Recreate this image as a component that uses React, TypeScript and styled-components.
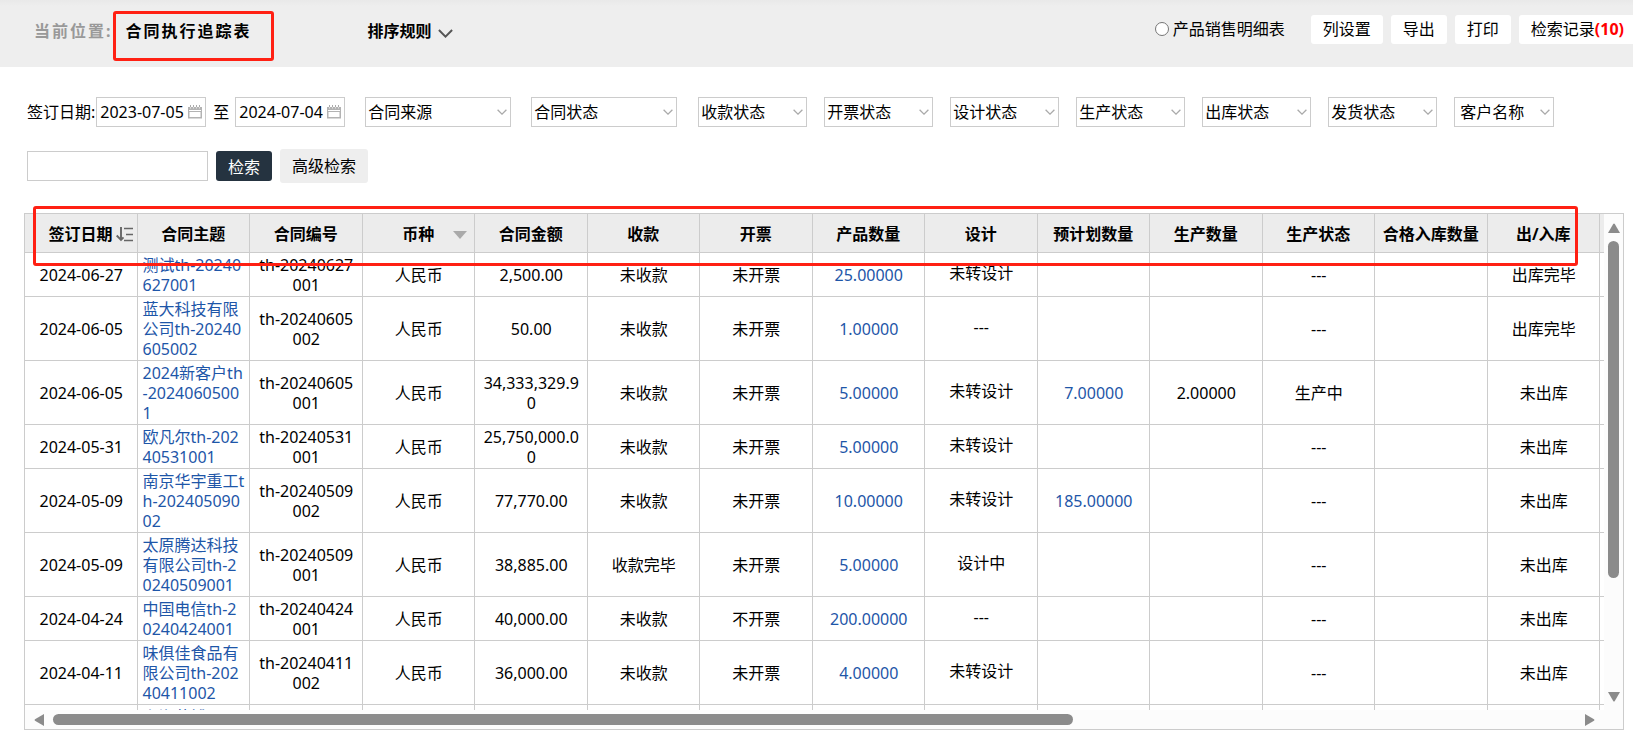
import React from "react";
import styled, { createGlobalStyle } from "styled-components";

const GlobalStyle = createGlobalStyle`
  *, *::before, *::after { box-sizing: border-box; }
  body {
    margin: 0;
    background: #fff;
    color: #000;
    font: 16px/20px "Noto Sans", "Noto Sans CJK SC", sans-serif;
  }
  button, input, select { font: inherit; color: inherit; margin: 0; }
`;

const Page = styled.div`
  display: flex;
  flex-direction: column;
  height: 100vh;
  overflow: hidden;
`;

const TopBar = styled.header`
  display: flex;
  align-items: flex-start;
  justify-content: space-between;
  height: 67px;
  padding: 14px 0 0 34px;
  background: linear-gradient(#e9e9e9, #eee 6px);
`;

const TopGroup = styled.div<{ $gap: number; $height: number }>`
  display: flex;
  align-items: center;
  gap: ${(p) => p.$gap}px;
  height: ${(p) => p.$height}px;
  white-space: nowrap;
`;

const Location = styled.div`
  display: flex;
  align-items: center;
  font-weight: 700;
  letter-spacing: 2px;
  color: #999;
`;

const Title = styled.h1`
  position: relative;
  margin: 0;
  padding: 0 22px 0 13px;
  font-size: 16px;
  line-height: 32px;
  color: #000;
`;

const TitleMark = styled.span`
  position: absolute;
  inset: -4px 0 -14px 0;
  border: 3px solid #ff2013;
  border-radius: 3px;
`;

const SortButton = styled.button`
  display: flex;
  align-items: center;
  gap: 6px;
  margin-left: 94px;
  padding: 0;
  border: 0;
  background: none;
  font-weight: 700;
  svg {
    margin-top: 4px;
  }
`;

const RadioLabel = styled.label`
  display: flex;
  align-items: center;
  gap: 4px;
  margin-right: 18px;
`;

const Radio = styled.input`
  appearance: none;
  width: 14px;
  height: 14px;
  border: 1px solid #767676;
  border-radius: 50%;
  background: #fff;
`;

const ToolButton = styled.button<{ $last?: boolean }>`
  height: 29px;
  padding: ${(p) => (p.$last ? "0 9px 0 12px" : "0 12px")};
  border: 0;
  border-radius: ${(p) => (p.$last ? "3px 0 0 3px" : "3px")};
  background: #fff;
`;

const Count = styled.b`
  color: #f00;
`;

const Filters = styled.form`
  display: flex;
  flex-direction: column;
  gap: 22px;
  padding: 30px 27px;
`;

const FilterRow = styled.div<{ $gap: number }>`
  display: flex;
  align-items: center;
  gap: ${(p) => p.$gap}px;
`;

const DateRange = styled.div`
  display: flex;
  align-items: center;
  gap: 1px;
  margin-right: 3px;
  white-space: nowrap;
`;

const To = styled.span`
  padding: 0 5px 0 6px;
`;

const Field = styled.span<{ $width: number }>`
  position: relative;
  display: flex;
  width: ${(p) => p.$width}px;
  svg {
    position: absolute;
    right: 4px;
    top: 0;
    bottom: 0;
    margin: auto 0;
    pointer-events: none;
  }
`;

const DateInput = styled.input`
  width: 100%;
  height: 30px;
  padding: 0 0 0 3px;
  border: 1px solid #ccc;
`;

const Select = styled.select<{ $inset?: number }>`
  appearance: none;
  width: 100%;
  height: 30px;
  padding: 0 20px 0 ${(p) => p.$inset ?? 2}px;
  border: 1px solid #ccc;
  border-radius: 0;
  background: #fff;
`;

const WideGroup = styled.div`
  display: flex;
  gap: 20px;
  margin-right: 4px;
`;

const SearchInput = styled.input`
  width: 181px;
  height: 30px;
  border: 1px solid #ccc;
`;

const SearchButton = styled.button`
  width: 56px;
  height: 30px;
  padding: 2px 0 0;
  border: 0;
  border-radius: 3px;
  background: #253340;
  color: #fff;
`;

const AdvancedButton = styled.button`
  width: 88px;
  height: 34px;
  padding: 0;
  border: 0;
  border-radius: 3px;
  background: #eee;
`;

const Frame = styled.section`
  position: relative;
  flex: 1;
  min-height: 0;
  display: grid;
  grid-template-columns: minmax(0, 1fr) 19px;
  grid-template-rows: minmax(0, 1fr) 19px;
  margin: 0 9px 3px 24px;
  border: 1px solid #ccc;
  background: #fcfcfc;
`;

const Viewport = styled.div`
  overflow: hidden;
  background: #fff;
`;

const Table = styled.table`
  width: 100%;
  table-layout: fixed;
  border-collapse: separate;
  border-spacing: 0;
`;

const Head = styled.th`
  position: sticky;
  top: 0;
  height: 39px;
  padding: 0;
  border: solid #ccc;
  border-width: 0 1px 1px 0;
  background: #ececec;
  font-weight: 700;
  white-space: nowrap;
`;

const HeadInner = styled.div<{ $sorted: boolean }>`
  display: flex;
  align-items: center;
  justify-content: ${(p) => (p.$sorted ? "flex-end" : "center")};
  gap: 3px;
  padding: ${(p) => (p.$sorted ? "2px 4px 0 0" : "2px 0 0")};
`;

const HeadCorner = styled.span`
  position: absolute;
  right: 7px;
  top: 17px;
  display: flex;
`;

const Stub = styled.col`
  width: 4px;
`;

const Cell = styled.td<{ $left?: boolean; $raised?: boolean }>`
  padding: ${(p) => (p.$raised ? "0 4px 3px 5px" : "2px 4px 1px 5px")};
  border: solid #ccc;
  border-width: 0 1px 1px 0;
  text-align: ${(p) => (p.$left ? "left" : "center")};
  vertical-align: middle;
  word-break: break-all;
  line-break: anywhere;
`;

const StubCell = styled.td`
  padding: 0;
  border-bottom: 1px solid #ccc;
`;

const StubHead = styled(StubCell)`
  background: #ececec;
`;

const Link = styled.a`
  color: #1e56a8;
  text-decoration: none;
`;

const HeaderMark = styled.div`
  position: absolute;
  top: -8px;
  left: 8px;
  right: 45px;
  height: 60px;
  border: 3px solid #ff2013;
  border-radius: 3px;
  pointer-events: none;
`;

const VBar = styled.div`
  display: flex;
  flex-direction: column;
  align-items: center;
  padding: 9px 0 8px;
`;

const HBar = styled.div`
  display: flex;
  align-items: center;
  padding: 0 9px;
`;

const VTrack = styled.div`
  flex: 1;
  width: 11px;
  margin: 8px 0 7px;
`;

const HTrack = styled.div`
  flex: 1;
  height: 11px;
  margin: 0 9px;
`;

const VThumb = styled.div`
  height: 76%;
  border-radius: 6px;
  background: #8b8b8b;
`;

const HThumb = styled.div`
  width: 67%;
  height: 11px;
  border-radius: 6px;
  background: #8b8b8b;
`;

const Chevron = ({ size = 10, color = "#aaa" }: { size?: number; color?: string }) => (
  <svg width={size} height={size * 0.6} viewBox="0 0 10 6" aria-hidden="true">
    <path d="M.6.7 5 5.1 9.4.7" fill="none" stroke={color} strokeWidth="1.3" />
  </svg>
);

const CalendarIcon = () => (
  <svg width="14" height="14" viewBox="0 0 14 14" aria-hidden="true">
    <path d="M0 2h14v11.5H0zM1.5 7v5h11V7z" fill="#b3b3b3" fillRule="evenodd" />
    <path d="M1 5h12v1H1z" fill="#fff" />
    <path d="M2.5 0v3.6M5.5 0v3.6M8.5 0v3.6M11.5 0v3.6" stroke="#ddd" strokeWidth="1" />
    <path d="M2.5 0v2M5.5 0v2M8.5 0v2M11.5 0v2" stroke="#aaa" strokeWidth="1" />
  </svg>
);

const SortIcon = () => (
  <svg width="17" height="15" viewBox="0 0 17 15" fill="none" stroke="#666" aria-hidden="true">
    <path d="M5 0v13M.7 8.5 5 13l2.5-2.6" strokeWidth="1.9" />
    <path d="M8 1.5h9M10 7.5h7M8 13.5h9" strokeWidth="1.7" />
  </svg>
);

const arrows = {
  up: "M0 10 5.200 1Q6 0 6.800 1L12 10z",
  down: "M0 0 5.200 9Q6 10 6.800 9L12 0z",
  left: "M10 0 1 5.200Q0 6 1 6.800L10 12z",
  right: "M0 0 9 5.200Q10 6 9 6.800L0 12z",
};

const ScrollArrow = ({ dir }: { dir: keyof typeof arrows }) => {
  const vertical = dir === "up" || dir === "down";
  const w = vertical ? 12 : 10;
  const h = vertical ? 10 : 12;
  return (
    <svg width={w} height={h} viewBox={`0 0 ${w} ${h}`} aria-hidden="true">
      <path d={arrows[dir]} fill="#8b8b8b" />
    </svg>
  );
};

const columns = [
  "签订日期", "合同主题", "合同编号", "币种", "合同金额", "收款", "开票",
  "产品数量", "设计", "预计划数量", "生产数量", "生产状态", "合格入库数量", "出/入库",
];
const LINKS = [1, 7, 9];
const DESIGN = 8;

const rows: string[][] = [
  ["2024-06-27", "测试th-20240627001", "th-20240627001", "人民币", "2,500.00", "未收款", "未开票", "25.00000", "未转设计", "", "", "---", "", "出库完毕"],
  ["2024-06-05", "蓝大科技有限公司th-20240605002", "th-20240605002", "人民币", "50.00", "未收款", "未开票", "1.00000", "---", "", "", "---", "", "出库完毕"],
  ["2024-06-05", "2024新客户th-20240605001", "th-20240605001", "人民币", "34,333,329.90", "未收款", "未开票", "5.00000", "未转设计", "7.00000", "2.00000", "生产中", "", "未出库"],
  ["2024-05-31", "欧凡尔th-20240531001", "th-20240531001", "人民币", "25,750,000.00", "未收款", "未开票", "5.00000", "未转设计", "", "", "---", "", "未出库"],
  ["2024-05-09", "南京华宇重工th-20240509002", "th-20240509002", "人民币", "77,770.00", "未收款", "未开票", "10.00000", "未转设计", "185.00000", "", "---", "", "未出库"],
  ["2024-05-09", "太原腾达科技有限公司th-20240509001", "th-20240509001", "人民币", "38,885.00", "收款完毕", "未开票", "5.00000", "设计中", "", "", "---", "", "未出库"],
  ["2024-04-24", "中国电信th-20240424001", "th-20240424001", "人民币", "40,000.00", "未收款", "不开票", "200.00000", "---", "", "", "---", "", "未出库"],
  ["2024-04-11", "味俱佳食品有限公司th-20240411002", "th-20240411002", "人民币", "36,000.00", "未收款", "未开票", "4.00000", "未转设计", "", "", "---", "", "未出库"],
  ["", "上海艾博th-20240411001", "th-20240411001", "", "", "", "", "", "", "", "", "", "", ""],
];

const SelectField = ({ label, width, inset }: { label: string; width: number; inset?: number }) => (
  <Field $width={width}>
    <Select aria-label={label} $inset={inset}>
      <option>{label}</option>
    </Select>
    <Chevron />
  </Field>
);

export default function App() {
  return (
    <>
      <GlobalStyle />
      <Page>
        <TopBar>
          <TopGroup $gap={0} $height={34}>
            <Location>
              当前位置:
              <Title>
                合同执行追踪表
                <TitleMark />
              </Title>
            </Location>
            <SortButton type="button">
              排序规则
              <Chevron size={15} color="#555" />
            </SortButton>
          </TopGroup>
          <TopGroup $gap={8} $height={30}>
            <RadioLabel>
              <Radio type="radio" name="report" />
              产品销售明细表
            </RadioLabel>
            <ToolButton type="button">列设置</ToolButton>
            <ToolButton type="button">导出</ToolButton>
            <ToolButton type="button">打印</ToolButton>
            <ToolButton type="button" $last>
              检索记录<Count>(10)</Count>
            </ToolButton>
          </TopGroup>
        </TopBar>

        <Filters onSubmit={(e) => e.preventDefault()}>
          <FilterRow $gap={17}>
            <DateRange>
              <label htmlFor="from">签订日期:</label>
              <Field $width={110}>
                <DateInput id="from" defaultValue="2023-07-05" />
                <CalendarIcon />
              </Field>
              <To>至</To>
              <Field $width={110}>
                <DateInput aria-label="至" defaultValue="2024-07-04" />
                <CalendarIcon />
              </Field>
            </DateRange>
            <WideGroup>
              <SelectField label="合同来源" width={146} />
              <SelectField label="合同状态" width={146} />
            </WideGroup>
            {["收款状态", "开票状态", "设计状态", "生产状态", "出库状态", "发货状态"].map((s) => (
              <SelectField key={s} label={s} width={109} />
            ))}
            <SelectField label="客户名称" width={100} inset={5} />
          </FilterRow>
          <FilterRow $gap={8}>
            <SearchInput aria-label="客户名称" />
            <SearchButton type="submit">检索</SearchButton>
            <AdvancedButton type="button">高级检索</AdvancedButton>
          </FilterRow>
        </Filters>

        <Frame>
          <Viewport>
            <Table>
              <colgroup>
                {columns.map((c) => (
                  <col key={c} />
                ))}
                <Stub />
              </colgroup>
              <thead>
                <tr>
                  {columns.map((c, i) => (
                    <Head key={c} scope="col">
                      <HeadInner $sorted={i === 0}>
                        {c}
                        {i === 0 && <SortIcon />}
                      </HeadInner>
                      {i === 3 && (
                        <HeadCorner>
                          <svg width="14" height="8" viewBox="0 0 14 8" aria-hidden="true">
                            <path d="M0 0h14L7 8z" fill="#aaa" />
                          </svg>
                        </HeadCorner>
                      )}
                    </Head>
                  ))}
                  <StubHead />
                </tr>
              </thead>
              <tbody>
                {rows.map((row, r) => (
                  <tr key={r}>
                    {row.map((text, i) => (
                      <Cell key={i} $left={i === 1} $raised={i === DESIGN}>
                        {LINKS.includes(i) && text ? <Link href="#">{text}</Link> : text || "\u00a0"}
                      </Cell>
                    ))}
                    <StubCell />
                  </tr>
                ))}
              </tbody>
            </Table>
          </Viewport>
          <VBar>
            <ScrollArrow dir="up" />
            <VTrack>
              <VThumb />
            </VTrack>
            <ScrollArrow dir="down" />
          </VBar>
          <HBar>
            <ScrollArrow dir="left" />
            <HTrack>
              <HThumb />
            </HTrack>
            <ScrollArrow dir="right" />
          </HBar>
          <HeaderMark />
        </Frame>
      </Page>
    </>
  );
}
